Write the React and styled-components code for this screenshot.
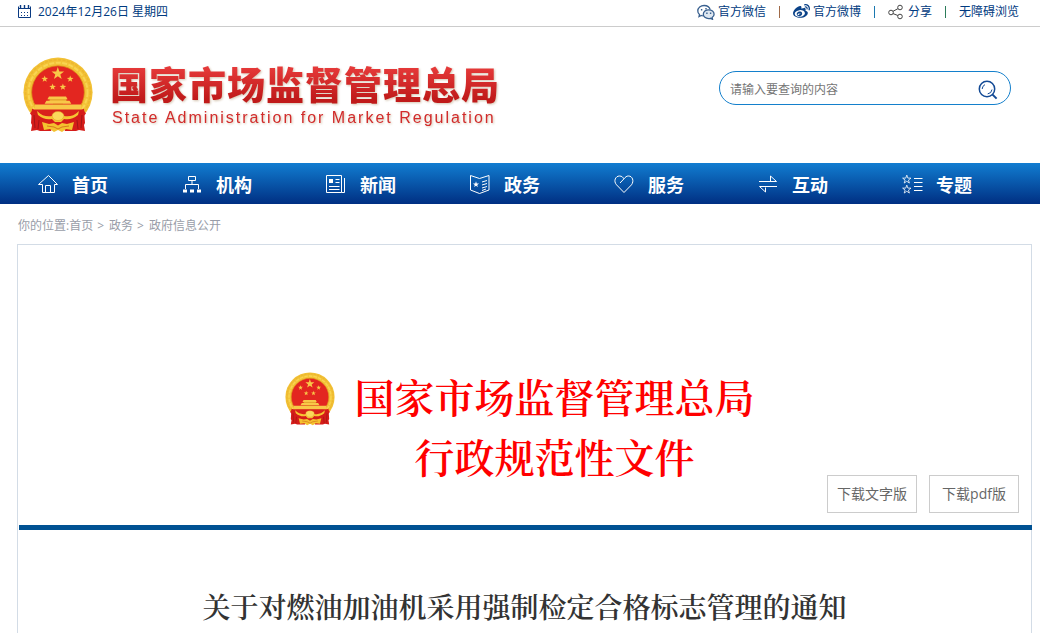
import React from "react";
import styled, { createGlobalStyle } from "styled-components";
import { FaWeibo } from "react-icons/fa";

const sans = '"Open Sans", "Noto Sans CJK SC", sans-serif';
const serif = '"Noto Serif CJK SC", "Source Han Serif SC", "Noto Sans CJK SC", serif';

const GlobalStyle = createGlobalStyle`
  * { box-sizing: border-box; }
  body { margin: 0; background: #fff; color: #333; font-family: ${sans}; font-size: 12px; }
  a { color: inherit; text-decoration: none; }
  h1, h2, p { margin: 0; font-weight: 400; }
`;

const TopBar = styled.div`
  display: flex;
  justify-content: space-between;
  height: 27px;
  padding: 0 21px 3px 18px;
  border-bottom: 1px solid #ccc;
  color: #003a80;
  line-height: 20px;
`;

const TopDate = styled.div`
  display: flex;
  align-items: center;
  gap: 7px;
`;

const TopLinks = styled.nav`
  display: flex;
  align-items: center;
`;

const TopLink = styled.a`
  display: flex;
  align-items: center;
  gap: 3px;
  svg { flex: none; }
`;

const Divider = styled.span`
  width: 1px;
  height: 12px;
  margin: 0 13px;
  background: ${(p) => p.$tone};
`;

const Header = styled.header`
  display: flex;
  justify-content: space-between;
  height: 136px;
  padding: 30px 29px 0 23px;
`;

const Brand = styled.a`
  display: flex;
  gap: 17px;
`;

const BrandText = styled.div`
  display: flex;
  flex-direction: column;
  gap: 3px;
  padding-top: 3px;
  filter: drop-shadow(1px 1px 1px rgba(150, 110, 60, 0.4));
`;

const BrandName = styled.h1`
  font-family: "Noto Sans CJK SC", sans-serif;
  font-size: 38px;
  font-weight: 900;
  letter-spacing: 1px;
  line-height: 46px;
  color: transparent;
  background: linear-gradient(#e63a3a 15%, #c01a1a 85%);
  background-clip: text;
  white-space: nowrap;
`;

const BrandEnglish = styled.p`
  padding-left: 2px;
  font-family: "Liberation Sans", Arial, sans-serif;
  font-size: 16px;
  letter-spacing: 2px;
  line-height: 18px;
  color: #d22b2b;
  white-space: nowrap;
`;

const SearchForm = styled.form`
  display: flex;
  align-items: center;
  width: 292px;
  height: 34px;
  margin-top: 14px;
  padding: 0 12px 0 10px;
  border: 1px solid #1480cc;
  border-radius: 17px;
`;

const SearchInput = styled.input`
  flex: 1;
  min-width: 0;
  padding: 3px 0 0;
  border: 0;
  outline: 0;
  background: none;
  font: 12px/20px ${sans};
  &::placeholder { color: #757575; opacity: 1; }
`;

const SearchButton = styled.button`
  display: flex;
  padding: 3px 0 0;
  border: 0;
  background: none;
  cursor: pointer;
`;

const MainNav = styled.nav`
  display: flex;
  height: 41px;
  padding: 0 16px;
  background: linear-gradient(#117dd1, #002f82);
`;

const NavItem = styled.a`
  display: flex;
  flex: 1;
  align-items: center;
  gap: 13px;
  padding: 2px 0 0 22px;
  color: #fff;
  font-size: 18px;
  font-weight: 700;
  line-height: 26px;
  white-space: nowrap;
`;

const Breadcrumb = styled.nav`
  display: flex;
  align-items: center;
  height: 40px;
  padding: 4px 18px 0;
  color: #999da8;
  line-height: 20px;
`;

const Crumb = styled.span`
  margin: 0 5px 0 4px;
`;

const Article = styled.main`
  margin: 0 8px 0 17px;
  border: 1px solid #d3dce6;
  padding-bottom: 40px;
`;

const Masthead = styled.section`
  display: grid;
  height: 280px;
  > * { grid-area: 1 / 1; }
`;

const MastheadTitle = styled.div`
  display: flex;
  justify-content: center;
  align-items: flex-start;
  gap: 20px;
  padding: 121px 10px 0 0;
  svg { margin-top: 6px; }
`;

const Issuer = styled.h2`
  font-family: ${serif};
  font-size: 40px;
  font-weight: 600;
  line-height: 60px;
  text-align: center;
  color: #f00;
`;

const Downloads = styled.div`
  display: flex;
  place-self: end;
  gap: 12px;
  padding: 0 12px 12px 0;
`;

const DownloadButton = styled.button`
  width: 90px;
  height: 38px;
  padding: 0;
  border: 1px solid #ccc;
  background: #fff;
  color: #666;
  font: 14px/20px ${sans};
  cursor: pointer;
`;

const Rule = styled.div`
  height: 5px;
  margin: 0 -1px 0 1px;
  background: #005293;
`;

const DocTitle = styled.h2`
  padding: 56px 20px 0;
  font-family: ${serif};
  font-size: 28px;
  font-weight: 600;
  line-height: 40px;
  text-align: center;
  color: #333;
`;

function starPoints(cx, cy, r) {
  return Array.from({ length: 10 }, (_, i) => {
    const a = (Math.PI / 5) * i - Math.PI / 2;
    const d = i % 2 ? r * 0.4 : r;
    return `${(cx + d * Math.cos(a)).toFixed(2)},${(cy + d * Math.sin(a)).toFixed(2)}`;
  }).join(" ");
}

function Emblem({ width, height }) {
  return (
    <svg width={width} height={height} viewBox="0 0 70 76" aria-hidden="true">
      <circle cx="35" cy="35.200" r="34.600" fill="#f3c236" />
      <circle cx="35" cy="35.200" r="32.500" fill="none" stroke="#e5ac2a" strokeWidth="1.600" strokeDasharray="3 1.500" opacity=".5" />
      <circle cx="35" cy="35.200" r="29.500" fill="none" stroke="#fbdc5c" strokeWidth="2" strokeDasharray="5 1.500" opacity=".7" />
      <circle cx="35" cy="35.200" r="26.400" fill="#e32620" stroke="#dc941b" strokeWidth=".8" />
      <g fill="#f8c848">
        <polygon points={starPoints(34.800, 16.600, 6.600)} />
        <polygon points={starPoints(21.700, 22, 3.500)} />
        <polygon points={starPoints(47.200, 22, 3.500)} />
        <polygon points={starPoints(29.600, 30, 3.500)} />
        <polygon points={starPoints(39.900, 30, 3.500)} />
        <path d="M26 39.500h17l1.600 2.800h-1.300v1.400h3.200l1.800 3H21.600l1.800-3h3.200v-1.400h-2.200z" />
        <path d="M12 47.400h46v5.600H12z" />
      </g>
      <path d="M25 42.900h19M30 47.200h10" stroke="#d98a1c" strokeWidth=".8" />
      <path d="M10 52.400h50l3 4-8 9-20 5-20-5-8-9z" fill="#d9221c" />
      <path d="M9 51.500 17 57l11 3 3 7-3 7H17l-3-1-6 1 1-6-1-2z" fill="#d51c19" />
      <path d="M61 51.500 53 57l-11 3-3 7 3 7h11l3-1 6 1-1-6 1-2z" fill="#d51c19" />
      <path d="m11 58 1 13M59 58l-1 13M16 63l-1 9M54 63l1 9" stroke="#a31517" strokeWidth="1" />
      <path d="M14 54c5 5 10 6 15 5l2-2 4-2 4 2 2 2c5 1 10 0 15-5l-1 4c-5 4-9 5-14 4l-3 3h-6l-3-3c-5 1-9 0-14-4z" fill="#f6c533" />
      <path d="M29 59a6 4.500 0 0 1 12 0c-1 3-3 4.500-6 4.500s-5-1.500-6-4.500z" fill="#fbd95b" stroke="#dd9c20" strokeWidth=".5" />
      <path d="m19 65 7 2 5-1 4 2.500 4-2.500 5 1 7-2-2 8-6-1-4 3-4-2-4 2-4-3-6 1z" fill="#f4c22f" />
      <path d="m24 69 7 1 4 2 4-2 7-1" fill="none" stroke="#d9781d" strokeWidth="1" />
    </svg>
  );
}

function CalendarIcon() {
  return (
    <svg width="13" height="15" viewBox="0 0 13 15" fill="none" stroke="#0a3a82" aria-hidden="true">
      <path d="M.5 2.500v11h12v-11M0 4.500h13" />
      <path d="M2.500 1v3M6.500 1v3M10.500 1v3" strokeWidth="1.400" />
      <path d="M3 8.500h8M3 11.500h8" strokeDasharray="1 2" />
    </svg>
  );
}

function WechatIcon() {
  return (
    <svg width="18" height="16" viewBox="0 0 18 16" fill="none" stroke="#39608f" strokeWidth="1.300" aria-hidden="true">
      <path d="M6.200 11.800c-.7 0-1.300-.1-1.900-.3L2 12.600l.5-2C1.400 9.700.8 8.400.8 7 .8 3.900 3.700 1.500 7.100 1.500c3 0 5.500 1.800 6.100 4.200" />
      <path d="M11.700 5.800c-3 0-5.400 2-5.400 4.400s2.400 4.400 5.400 4.400c.6 0 1.200-.1 1.800-.3l2 1-.4-1.800c1.300-.8 2-2 2-3.300 0-2.400-2.400-4.400-5.400-4.400z" fill="#dfe8f1" />
      <path d="M4.600 5v1.500M9 4v1.500M9.900 8.500V10M13.600 8.500V10" strokeWidth="1.400" />
    </svg>
  );
}

function ShareIcon() {
  return (
    <svg width="17" height="16" viewBox="0 0 17 16" fill="none" stroke="#444" aria-hidden="true">
      <circle cx="3" cy="8.500" r="2.300" />
      <circle cx="12" cy="3.500" r="2.300" />
      <circle cx="12" cy="12.500" r="2.300" />
      <path d="m5 7.300 4.900-2.600M5 9.600l4.900 1.900" />
    </svg>
  );
}

function SearchIcon() {
  return (
    <svg width="20" height="20" viewBox="0 0 20 20" fill="none" stroke="#134a95" aria-hidden="true">
      <circle cx="9" cy="9" r="7.700" strokeWidth="1.500" />
      <path d="m14.600 14.600 4 4" strokeWidth="2" />
      <path d="M4.200 9A5 5 0 0 1 7 4.600M14 9.500a5 5 0 0 1-4.300 4.400" strokeWidth="1" />
    </svg>
  );
}

const navIcons = {
  home: <path d="m.5 10.500 10-9 9 9h-3v8h-12v-8zM7.500 18v-6.500h5V18" />,
  org: (
    <>
      <path d="M6.500 2.500h7v4h-7zM10 6.500v4M3.500 15v-4.500h13V15" />
      <path d="M1 17h4M8 17h4M15 17h4" strokeWidth="3" />
    </>
  ),
  news: (
    <>
      <path d="M.5 1.500h15v17H.5zM18.500 4v14.500h-3" />
      <path d="M9.500 5.500h4M9.500 8.500h4M3 12.500h10.500M3 15.500h10.500" />
      <path d="M3 5h4v4H3z" fill="#fff" stroke="none" />
    </>
  ),
  gov: (
    <>
      <path d="m.5 1.500 9 3 9.500-3V16l-9.500 3.500-9-3.500z" />
      <path d="m12 8 5-1.500M12 11l5-1.500M12 14l5-1.500M12 16.500l4-1.500" />
      <polygon points={starPoints(6, 10.500, 3.200)} fill="#fff" stroke="none" />
    </>
  ),
  heart: <path d="m10 18.500-7.500-7.700C-.8 7 1.500 2 5.500 2 8 2 9 3.500 10 4.800 11.500 3 12.500 2 14.500 2c4 0 5.800 5 3 8.800zM10 4.800 6 9" />,
  swap: <path d="M1 7.500h17.500l-6-5.500v5.500M19 12.500H1.500L7.500 18v-4.500" />,
  topic: (
    <>
      <polygon points={starPoints(4.800, 5.500, 4.400)} strokeWidth=".8" />
      <polygon points={starPoints(4.800, 15.500, 4.400)} strokeWidth=".8" />
      <path d="M12 4.500h8.500M12 8.500h8.500M12 12.500h8.500M12 16.500h8.500" />
    </>
  ),
};

function NavIcon({ name }) {
  return (
    <svg width="21" height="21" viewBox="0 0 21 21" fill="none" stroke="#fff" strokeWidth="1" aria-hidden="true">
      {navIcons[name]}
    </svg>
  );
}

const navItems = [
  ["home", "首页"],
  ["org", "机构"],
  ["news", "新闻"],
  ["gov", "政务"],
  ["heart", "服务"],
  ["swap", "互动"],
  ["topic", "专题"],
];

export default function App() {
  return (
    <>
      <GlobalStyle />
      <TopBar>
        <TopDate>
          <CalendarIcon />
          <span>2024年12月26日 星期四</span>
        </TopDate>
        <TopLinks>
          <TopLink href="#wechat"><WechatIcon />官方微信</TopLink>
          <Divider $tone="#a06a48" />
          <TopLink href="#weibo"><FaWeibo size={17} color="#0a4288" />官方微博</TopLink>
          <Divider $tone="#1a78b0" />
          <TopLink href="#share"><ShareIcon />分享</TopLink>
          <Divider $tone="#2c7c5a" />
          <TopLink href="#accessible">无障碍浏览</TopLink>
        </TopLinks>
      </TopBar>
      <Header>
        <Brand href="#home">
          <Emblem width={70} height={76} />
          <BrandText>
            <BrandName>国家市场监督管理总局</BrandName>
            <BrandEnglish>State Administration for Market Regulation</BrandEnglish>
          </BrandText>
        </Brand>
        <SearchForm role="search">
          <SearchInput type="text" aria-label="搜索" placeholder="请输入要查询的内容" />
          <SearchButton type="submit" aria-label="搜索"><SearchIcon /></SearchButton>
        </SearchForm>
      </Header>
      <MainNav>
        {navItems.map(([icon, label]) => (
          <NavItem key={icon} href={`#${icon}`}><NavIcon name={icon} />{label}</NavItem>
        ))}
      </MainNav>
      <Breadcrumb>
        <span>你的位置:</span>
        <a href="#home">首页</a>
        <Crumb>&gt;</Crumb>
        <a href="#gov">政务</a>
        <Crumb>&gt;</Crumb>
        <a href="#open">政府信息公开</a>
      </Breadcrumb>
      <Article>
        <Masthead>
          <MastheadTitle>
            <Emblem width={50} height={54} />
            <Issuer>国家市场监督管理总局<br />行政规范性文件</Issuer>
          </MastheadTitle>
          <Downloads>
            <DownloadButton type="button">下载文字版</DownloadButton>
            <DownloadButton type="button">下载pdf版</DownloadButton>
          </Downloads>
        </Masthead>
        <Rule />
        <DocTitle>关于对燃油加油机采用强制检定合格标志管理的通知</DocTitle>
      </Article>
    </>
  );
}
